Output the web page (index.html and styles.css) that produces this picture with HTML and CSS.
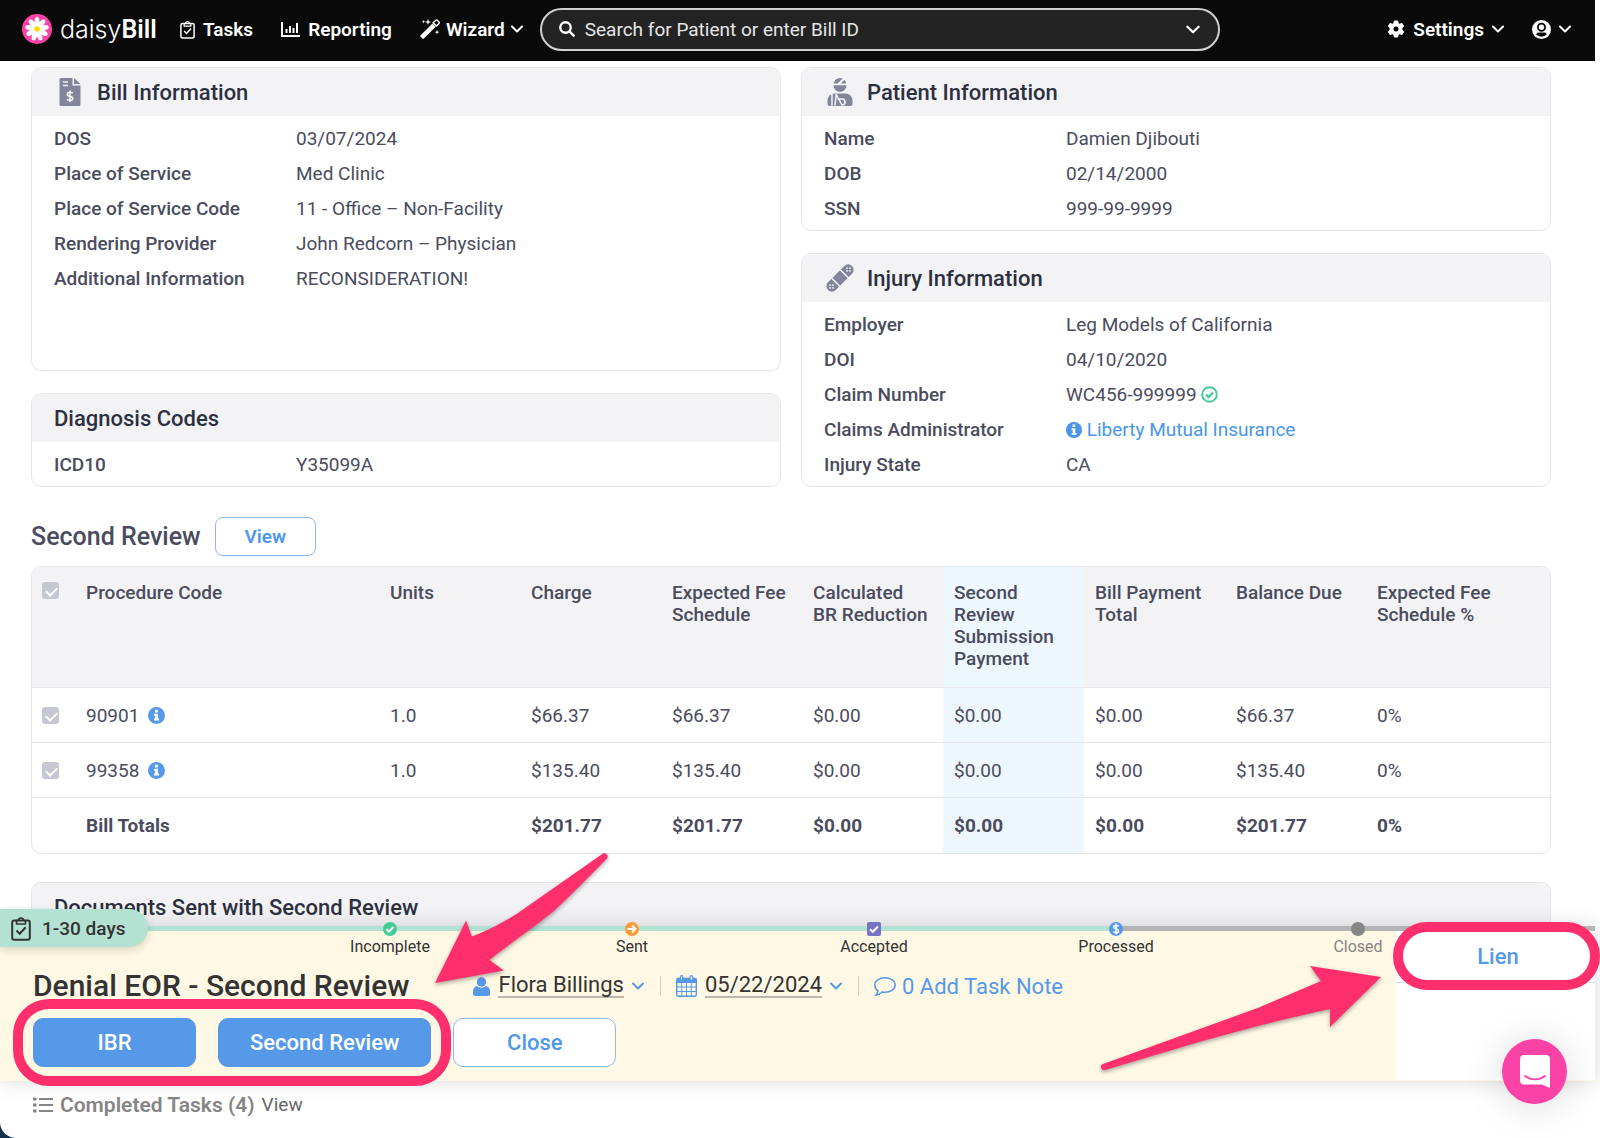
FILE: index.html
```
<!DOCTYPE html>
<html lang="en">
<head>
  <meta charset="UTF-8" />
  <meta name="viewport" content="width=device-width, initial-scale=1.0"/>
  <title>daisyBill - Second Review</title>
  <link rel="stylesheet" href="styles.css">
</head>
<body>
  <!-- shared icons -->
  <svg class="sprite" aria-hidden="true">
    <symbol id="chevron" viewBox="0 0 12 8"><path d="M1 1.5l5 5 5-5" fill="none" stroke="currentColor" stroke-width="2" stroke-linecap="round" stroke-linejoin="round"/></symbol>
    <symbol id="info" viewBox="0 0 16 16"><circle cx="8" cy="8" r="8" fill="currentColor"/><path d="M6.6 2.6h2.6v2.5H6.600zM5.600 6.300h3.700v4.600h1.100v1.900H5.600v-1.900h1.100V8.200H5.600z" fill="#fff"/></symbol>
    <symbol id="clipboard" viewBox="0 0 20 25"><rect x="1.200" y="4.500" width="17.600" height="19.300" rx="2" fill="none" stroke="currentColor" stroke-width="2"/><path d="M5.500 8V4.500h2a2.500 2.500 0 0 1 5 0h2V8z" fill="none" stroke="currentColor" stroke-width="1.600" stroke-linejoin="round"/><path d="M5.500 14.500l3.200 3.200 6-6.500" fill="none" stroke="currentColor" stroke-width="2"/></symbol>
  </svg>

  <div class="page">
    <header class="topbar">
      <a class="logo" href="#">
        <svg width="30" height="30" viewBox="0 0 30 30">
          <circle cx="15" cy="15" r="15" fill="#fb43a7"/>
          <g fill="#fff">
            <ellipse cx="15" cy="8" rx="2.500" ry="5"/>
            <ellipse cx="15" cy="8" rx="2.500" ry="5" transform="rotate(40 15 15)"/>
            <ellipse cx="15" cy="8" rx="2.500" ry="5" transform="rotate(80 15 15)"/>
            <ellipse cx="15" cy="8" rx="2.500" ry="5" transform="rotate(120 15 15)"/>
            <ellipse cx="15" cy="8" rx="2.500" ry="5" transform="rotate(160 15 15)"/>
            <ellipse cx="15" cy="8" rx="2.500" ry="5" transform="rotate(200 15 15)"/>
            <ellipse cx="15" cy="8" rx="2.500" ry="5" transform="rotate(240 15 15)"/>
            <ellipse cx="15" cy="8" rx="2.500" ry="5" transform="rotate(280 15 15)"/>
            <ellipse cx="15" cy="8" rx="2.500" ry="5" transform="rotate(320 15 15)"/>
            <circle cx="15" cy="15" r="5"/>
          </g>
          <circle cx="15" cy="15" r="2.800" fill="#fbdc00"/>
        </svg>
        <span class="logo-text">daisy<b>Bill</b></span>
      </a>
      <nav class="nav">
        <a href="#"><svg width="15" height="19"><use href="#clipboard"/></svg>Tasks</a>
        <a href="#">
          <svg width="19" height="15" viewBox="0 0 19 15"><path d="M1 0v14h18" fill="none" stroke="#fff" stroke-width="2"/><path d="M5.500 11V7M9 11V4M12.500 11V6M16 11V1" stroke="#fff" stroke-width="2"/></svg>Reporting
        </a>
        <a href="#" class="wizard">
          <svg width="20" height="20" viewBox="0 0 20 20" fill="#fff"><path d="M.7 16.300L12.500 4.500l3.200 3.200L3.900 19.500a1 1 0 0 1-1.500 0L.7 17.800a1 1 0 0 1 0-1.500z"/><path d="M13.200 3.800L15.800 1.200a1 1 0 0 1 1.500 0l1.700 1.700a1 1 0 0 1 0 1.500L16.400 7z" fill="none" stroke="#fff" stroke-width="1.400"/><path d="M8 0l.8 2.200L11 3l-2.200.8L8 6l-.8-2.200L5 3l2.200-.8zM3.500 1l.5 1.200 1.200.5-1.200.5-.5 1.200L3 3.200l-1.200-.5L3 2.200zM17 11l.6 1.600 1.600.6-1.600.6L17 15.400l-.6-1.600-1.600-.6 1.600-.6z"/></svg>Wizard
          <svg class="chev" width="12" height="8"><use href="#chevron"/></svg>
        </a>
      </nav>
      <label class="search">
        <svg width="16" height="16" viewBox="0 0 16 16" fill="none" stroke="#fff" stroke-width="2.400"><circle cx="6.500" cy="6.500" r="5.200"/><path d="M10.400 10.400l5 5"/></svg>
        <input type="text" placeholder="Search for Patient or enter Bill ID" aria-label="Search">
        <svg class="chev" width="14" height="9"><use href="#chevron"/></svg>
      </label>
      <nav class="nav account">
        <a href="#">
          <svg width="18" height="18" viewBox="0 0 18 18"><path fill="#fff" fill-rule="evenodd" stroke="#fff" stroke-linejoin="round" d="M7.300 0h3.400l.5 2.400 1.500.8 2.300-.8 1.700 2.900-1.800 1.700v2l1.800 1.700-1.700 2.900-2.300-.8-1.500.9-.5 2.300H7.300l-.5-2.300-1.500-.9-2.300.8-1.700-2.900L3.100 9V7L1.300 5.300 3 2.400l2.300.8 1.500-.8zM9 4.900a3.100 3.100 0 1 0 0 6.200 3.100 3.100 0 0 0 0-6.200z" transform="translate(0 1)"/></svg>Settings
          <svg class="chev" width="12" height="8"><use href="#chevron"/></svg>
        </a>
        <a href="#" aria-label="Account">
          <svg width="19" height="19" viewBox="0 0 19 19"><circle cx="9.500" cy="9.500" r="9.500" fill="#fff"/><circle cx="9.500" cy="7.300" r="3.600" fill="none" stroke="#0a0a0a" stroke-width="1.800"/><path d="M4 14.300c.8-1.700 2-1.900 3.200-1.900h4.600c1.200 0 2.400.2 3.200 1.900a7.500 7.500 0 0 1-11 0z" fill="#0a0a0a"/></svg>
          <svg class="chev" width="12" height="8"><use href="#chevron"/></svg>
        </a>
      </nav>
    </header>

    <main>
      <div class="cards">
        <div class="column">
          <section class="card grow">
            <h2>
              <svg width="22" height="28" viewBox="0 0 21 28"><path d="M1.500 0H13v7.500h8V26.500a1.500 1.500 0 0 1-1.500 1.500h-18A1.500 1.500 0 0 1 0 26.500v-25A1.500 1.500 0 0 1 1.500 0zM14.500 0L21 6h-6.500z" fill="#83869b"/><path d="M3.500 4h5M3.500 7.500h5" stroke="#f3f3f6" stroke-width="1.600"/><path d="M13.300 15.200c-.8-.7-1.800-1-2.800-1-1.700 0-2.700.8-2.700 2 0 3 5.500 1.300 5.500 4.300 0 1.300-1.200 2-2.800 2-1.200 0-2.300-.4-3-1.200M10.500 12.400v11.800" fill="none" stroke="#f3f3f6" stroke-width="1.600"/></svg>
              Bill Information
            </h2>
            <dl>
              <dt>DOS</dt><dd>03/07/2024</dd>
              <dt>Place of Service</dt><dd>Med Clinic</dd>
              <dt>Place of Service Code</dt><dd>11 - Office – Non-Facility</dd>
              <dt>Rendering Provider</dt><dd>John Redcorn – Physician</dd>
              <dt>Additional Information</dt><dd>RECONSIDERATION!</dd>
            </dl>
          </section>
          <section class="card">
            <h2>Diagnosis Codes</h2>
            <dl>
              <dt>ICD10</dt><dd>Y35099A</dd>
            </dl>
          </section>
        </div>
        <div class="column">
          <section class="card">
            <h2>
              <svg width="25" height="28" viewBox="0 0 25 28"><path d="M6.300 5.500A6.500 6.500 0 0 1 12.500 0c1 0 2 .2 2.800.6L10 5.500zM17 1.800a6.500 6.500 0 0 1 1.700 3.700h-5.500zM6 7.300h13a6.500 6.500 0 0 1-13 0z" fill="#83869b"/><path d="M7 15.500h11a7 7 0 0 1 7 7V26a2 2 0 0 1-2 2H2a2 2 0 0 1-2-2v-3.500a7 7 0 0 1 7-7z" fill="#83869b"/><path d="M4.500 16v12M8.800 15.500l-1.300 12M8.800 16.500L15 28M10 21h4.500a3 3 0 0 1 0 6" fill="none" stroke="#f3f3f6" stroke-width="1.500"/></svg>
              Patient Information
            </h2>
            <dl>
              <dt>Name</dt><dd>Damien Djibouti</dd>
              <dt>DOB</dt><dd>02/14/2000</dd>
              <dt>SSN</dt><dd>999-99-9999</dd>
            </dl>
          </section>
          <section class="card">
            <h2>
              <svg width="28" height="28" viewBox="0 0 28 28"><g transform="rotate(-45 14 14)"><rect x="-3" y="8.500" width="34" height="11" rx="5.500" fill="#83869b"/><path d="M8 8v12M20 8v12" stroke="#f3f3f6" stroke-width="1.500"/><g fill="#f3f3f6"><circle cx="2" cy="12" r=".9"/><circle cx="2" cy="16" r=".9"/><circle cx="0" cy="14" r=".9"/><circle cx="4" cy="14" r=".9"/><circle cx="26" cy="12" r=".9"/><circle cx="26" cy="16" r=".9"/><circle cx="24" cy="14" r=".9"/><circle cx="28" cy="14" r=".9"/></g></g></svg>
              Injury Information
            </h2>
            <dl>
              <dt>Employer</dt><dd>Leg Models of California</dd>
              <dt>DOI</dt><dd>04/10/2020</dd>
              <dt>Claim Number</dt>
              <dd>WC456-999999 <svg width="17" height="17" viewBox="0 0 17 17" fill="none" stroke="#43cb97"><circle cx="8.500" cy="8.500" r="7.300" stroke-width="2"/><path d="M5 8.500l2.600 2.500L12 6.500" stroke-width="2.400"/></svg></dd>
              <dt>Claims Administrator</dt>
              <dd><a href="#"><svg width="16" height="16"><use href="#info"/></svg> Liberty Mutual Insurance</a></dd>
              <dt>Injury State</dt><dd>CA</dd>
            </dl>
          </section>
        </div>
      </div>

      <div class="section-title">
        <h1>Second Review</h1>
        <button type="button" class="btn btn-small">View</button>
      </div>

      <div class="table-wrap">
        <table>
          <colgroup>
            <col class="col-check"><col><col class="col-num"><col class="col-num"><col class="col-num"><col class="col-num">
            <col class="col-num"><col class="col-num"><col class="col-num"><col class="col-last">
          </colgroup>
          <thead>
            <tr>
              <th><input type="checkbox" checked disabled aria-label="Select all"></th>
              <th>Procedure Code</th>
              <th>Units</th>
              <th>Charge</th>
              <th>Expected Fee Schedule</th>
              <th>Calculated<br>BR Reduction</th>
              <th class="highlight">Second<br>Review<br>Submission Payment</th>
              <th>Bill Payment Total</th>
              <th>Balance Due</th>
              <th>Expected Fee<br>Schedule %</th>
            </tr>
          </thead>
          <tbody>
            <tr>
              <td><input type="checkbox" checked disabled aria-label="Select 90901"></td>
              <td>90901 <svg class="row-info" width="17" height="17"><use href="#info"/></svg></td>
              <td>1.0</td><td>$66.37</td><td>$66.37</td><td>$0.00</td><td class="highlight">$0.00</td><td>$0.00</td><td>$66.37</td><td>0%</td>
            </tr>
            <tr>
              <td><input type="checkbox" checked disabled aria-label="Select 99358"></td>
              <td>99358 <svg class="row-info" width="17" height="17"><use href="#info"/></svg></td>
              <td>1.0</td><td>$135.40</td><td>$135.40</td><td>$0.00</td><td class="highlight">$0.00</td><td>$0.00</td><td>$135.40</td><td>0%</td>
            </tr>
            <tr class="totals">
              <td></td><td>Bill Totals</td><td></td><td>$201.77</td><td>$201.77</td><td>$0.00</td><td class="highlight">$0.00</td><td>$0.00</td><td>$201.77</td><td>0%</td>
            </tr>
          </tbody>
        </table>
      </div>

      <section class="card documents">
        <h2>Documents Sent with Second Review</h2>
      </section>
    </main>

    <div class="taskbar">
      <div class="track"></div>
      <div class="due"><svg width="20" height="25"><use href="#clipboard"/></svg>1-30 days</div>

      <div class="task-grid">
        <div class="task">
          <ol class="steps">
            <li><svg width="14" height="14" viewBox="0 0 14 14"><circle cx="7" cy="7" r="7" fill="#43cb97"/><path d="M3.500 7.200l2.500 2.300 4.500-4.500" fill="none" stroke="#fff" stroke-width="2"/></svg>Incomplete</li>
            <li><svg width="14" height="14" viewBox="0 0 14 14"><circle cx="7" cy="7" r="7" fill="#fd9a37"/><path d="M2.500 7h7.500M7 3.500L10.500 7 7 10.500" fill="none" stroke="#fff" stroke-width="2"/></svg>Sent</li>
            <li><svg width="14" height="14" viewBox="0 0 14 14"><rect width="14" height="14" rx="2" fill="#7672c4"/><path d="M3 7.200l2.800 2.600 5.200-5.300" fill="none" stroke="#fff" stroke-width="2"/></svg>Accepted</li>
            <li><svg width="14" height="14" viewBox="0 0 14 14"><circle cx="7" cy="7" r="7" fill="#5699e8"/><path d="M9.600 4.400C9 3.700 8 3.400 7 3.400c-1.400 0-2.400.6-2.400 1.700 0 2.600 5 1.200 5 3.800 0 1.100-1.100 1.800-2.600 1.800-1.100 0-2.100-.4-2.700-1.100M7 1.500v11" fill="none" stroke="#fff" stroke-width="1.500"/></svg>Processed</li>
            <li class="muted"><svg width="14" height="14" viewBox="0 0 14 14"><circle cx="7" cy="7" r="7" fill="#858585"/></svg>Closed</li>
          </ol>

          <div class="task-head">
            <h2>Denial EOR - Second Review</h2>
            <div class="meta">
              <a href="#" class="meta-item">
                <svg width="17" height="19" viewBox="0 0 17 19" fill="#5699e8"><circle cx="8.500" cy="5" r="4.700"/><path d="M4 9c2.500 2.200 6.500 2.200 9 0 2.500.5 4 2.500 4 5.500v2.500a2 2 0 0 1-2 2H2a2 2 0 0 1-2-2v-2.500C0 11.500 1.500 9.500 4 9z"/></svg>
                <span>Flora Billings</span>
                <svg class="chev" width="12" height="8"><use href="#chevron"/></svg>
              </a>
              <a href="#" class="meta-item">
                <svg width="21" height="22" viewBox="0 0 21 22" fill="none" stroke="#5699e8"><rect x=".7" y="3.500" width="19.600" height="17.800" rx="1.500" stroke-width="1.400"/><path d="M1 3.500h19v4H1z" fill="#5699e8"/><path d="M1 12h19M1 16.500h19M5.700 8v13M10.500 8v13M15.300 8v13"/><rect x="4.300" y=".7" width="2.600" height="4.600" rx="1.300" fill="#fef8e4" stroke-width="1.200"/><rect x="14" y=".7" width="2.600" height="4.600" rx="1.300" fill="#fef8e4" stroke-width="1.200"/></svg>
                <span>05/22/2024</span>
                <svg class="chev" width="12" height="8"><use href="#chevron"/></svg>
              </a>
              <a href="#" class="meta-item note">
                <svg width="22" height="19" viewBox="0 0 22 19"><path d="M11 .8c5.700 0 10.200 3.200 10.200 7.200S16.700 15.200 11 15.200c-1 0-2-.1-2.900-.3C6.500 16.600 4.400 17.800 2 18c1-1 1.700-2.400 2-4.200C2 12.500.8 10.400.8 8 .8 4 5.300.8 11 .8z" fill="none" stroke="#5699e8" stroke-width="1.500"/></svg>
                0 Add Task Note
              </a>
            </div>
          </div>

          <div class="actions">
            <div class="ringed">
              <button type="button" class="btn btn-primary">IBR</button>
              <button type="button" class="btn btn-primary">Second Review</button>
            </div>
            <button type="button" class="btn">Close</button>
          </div>
        </div>

        <aside class="side">
          <div class="ringed">
            <button type="button" class="lien">Lien</button>
          </div>
        </aside>
      </div>

      <svg class="arrow arrow-left" width="176" height="136" viewBox="0 0 176 136">
        <path d="M3 132L34 69.500l6 16 C57 79 72 71 86 62L171 2.500c3-1.500 6 2 4 5C157 26 140 43 122 60 98 79 76 94 57.500 109L72 119.500z" fill="#ff2f6d"/>
      </svg>
      <svg class="arrow arrow-right" width="284" height="108" viewBox="0 0 284 108">
        <path d="M4 99L160 42.500 222 16 211 1l71 11-51 50V44C188 53 144 65 100 77L6 105c-4 1-6-5-2-6z" fill="#ff2f6d"/>
      </svg>
    </div>

    <footer class="completed">
      <svg width="20" height="16" viewBox="0 0 20 16" fill="none" stroke="#858585"><path d="M6 2h14M6 8h14M6 14h14" stroke-width="2.200"/><path d="M0 2h3.500M0 8h3.500M0 14h3.500" stroke-width="3"/></svg>
      <b>Completed Tasks (4)</b>
      <a href="#">View</a>
    </footer>

    <button type="button" class="chat" aria-label="Open chat">
      <svg width="30" height="34" viewBox="0 0 30 34"><path d="M4 0h22a4 4 0 0 1 4 4v29l-8-3.500H4a4 4 0 0 1-4-4V4a4 4 0 0 1 4-4z" fill="#fff"/><path d="M5 21c6 4.500 14 4.500 20 0" fill="none" stroke="#fb43a7" stroke-width="1.800" stroke-linecap="round"/></svg>
    </button>
  </div>
</body>
</html>
```

FILE: styles.css
```
* {
  box-sizing: border-box;
}

body {
  margin: 0;
  min-height: 100vh;
  background: #fff linear-gradient(#12304d, #12304d) left bottom / 16px 16px no-repeat;
  font-family: Roboto, "Liberation Sans", sans-serif;
  font-size: 19px;
  color: #4a4c5e;
}

.page {
  position: relative;
  min-height: 100vh;
  margin-right: 5px;
  background: #fff;
  border-bottom-left-radius: 16px;
}

h1, h2, dl, dd, ol {
  margin: 0;
  padding: 0;
}

a {
  color: #4796ec;
  text-decoration: none;
}

button, input {
  font-family: inherit;
  font-size: inherit;
}

.sprite {
  position: absolute;
  width: 0;
  height: 0;
}

/* top bar */
.topbar {
  display: flex;
  align-items: center;
  height: 61px;
  padding: 0 24px 3px 22px;
  background: #0a0a0a;
}

.logo {
  display: flex;
  align-items: center;
  gap: 8px;
  width: 158px;
  color: #fff;
}

.logo-text {
  font-family: Inter, sans-serif;
  font-size: 25px;
  font-weight: 300;
  line-height: 30px;
}

.logo-text b {
  font-family: Roboto, sans-serif;
  font-weight: 600;
}

.nav {
  display: flex;
  align-items: center;
  gap: 28px;
}

.nav a {
  display: flex;
  align-items: center;
  gap: 8px;
  color: #fff;
  font-weight: 600;
}

.nav .wizard {
  gap: 6px;
}

.search {
  display: flex;
  align-items: center;
  gap: 10px;
  flex: 0 1 680px;
  height: 43px;
  margin-left: 17px;
  padding: 0 18px 0 17px;
  background: #232323;
  border: 2px solid #cfcfcf;
  border-radius: 22px;
  color: #fff;
}

.search input {
  flex: 1;
  min-width: 0;
  padding: 0;
  background: none;
  border: 0;
  outline: 0;
  color: #fff;
}

.search input::placeholder {
  color: #e6e6e6;
  opacity: 1;
}

.account {
  margin-left: auto;
}

/* info cards */
main {
  padding: 6px 44px 0 31px;
}

.cards {
  display: grid;
  grid-template-columns: 1fr 1fr;
  gap: 20px;
}

.column {
  display: flex;
  flex-direction: column;
  gap: 22px;
}

.card {
  border: 1px solid #e6e6e9;
  border-radius: 10px;
  overflow: hidden;
}

.grow {
  flex: 1;
}

.card h2 {
  display: flex;
  align-items: center;
  gap: 11px;
  height: 48px;
  padding: 0 22px;
  background: #f3f3f6;
  color: #2d3040;
  font-size: 22px;
  font-weight: 500;
}

.card h2 svg {
  width: 32px;
}

.card dl {
  display: grid;
  grid-template-columns: 242px 1fr;
  padding: 5px 22px 4px;
  line-height: 35px;
}

.card dt {
  font-weight: 500;
}

.card dd svg {
  vertical-align: -2px;
}

.section-title {
  display: flex;
  align-items: center;
  gap: 14px;
  margin: 30px 0 10px;
}

h1 {
  font-size: 25px;
  font-weight: 500;
  line-height: 34px;
}

.btn {
  min-width: 163px;
  height: 49px;
  padding: 0 31px;
  background: #fff;
  border: 1px solid #8dbaf1;
  border-radius: 10px;
  color: #4f97e9;
  font-size: 22px;
  font-weight: 500;
}

.btn-small {
  min-width: 101px;
  height: 39px;
  padding: 0 16px;
  border-radius: 8px;
  font-size: 19px;
  font-weight: 600;
}

.btn-primary {
  background: #5699e8;
  border-color: #5699e8;
  color: #fff;
}

/* procedure table */
.table-wrap {
  border: 1px solid #e6e6e9;
  border-radius: 10px;
  overflow: hidden;
}

table {
  width: 100%;
  table-layout: fixed;
  border-spacing: 0;
}

.col-check { width: 43px; }
.col-num { width: 141px; }
.col-last { width: 184px; }

th {
  height: 121px;
  padding: 15px 0 0 11px;
  background: #f3f3f6;
  border-bottom: 1px solid #e6e6e9;
  font-weight: 500;
  line-height: 22px;
  text-align: left;
  vertical-align: top;
}

td {
  height: 55px;
  padding: 0 0 0 11px;
  border-bottom: 1px solid #e6e6e9;
}

th:first-child, td:first-child {
  padding-left: 10px;
}

th.highlight, td.highlight {
  background: #eff7fe;
}

.totals td {
  border-bottom: 0;
  font-weight: 700;
}

.row-info {
  margin-left: 4px;
  color: #5699e8;
  vertical-align: -2px;
}

input[type="checkbox"] {
  appearance: none;
  position: relative;
  display: block;
  width: 17px;
  height: 17px;
  margin: 0;
  background: #c5c8d2;
  border-radius: 3px;
}

input[type="checkbox"]::after {
  content: "";
  position: absolute;
  left: 6px;
  top: 3px;
  width: 5px;
  height: 9px;
  border: solid #fff;
  border-width: 0 2px 2px 0;
  transform: rotate(45deg);
}

.documents {
  margin: 28px 0 -5px;
  border-bottom: 0;
  border-radius: 10px 10px 0 0;
}

/* task bar */
.taskbar {
  position: relative;
  background: #fef8e4;
  box-shadow: 0 0 20px rgba(0, 0, 0, 0.15);
}

.track {
  height: 5px;
  background: linear-gradient(to right, #b3e2d3 70%, #b4b4b4 70%);
}

.due {
  position: absolute;
  left: 0;
  top: -17px;
  display: flex;
  align-items: center;
  gap: 11px;
  width: 148px;
  height: 38px;
  padding-left: 11px;
  background: #b3e2d3;
  border-radius: 0 19px 19px 0;
  box-shadow: 0 3px 8px rgba(0, 0, 0, 0.15);
  color: #333;
  font-weight: 500;
}

.task-grid {
  display: grid;
  grid-template-columns: 1fr 199px;
}

.task {
  padding: 0 0 14px 33px;
}

.steps {
  position: relative;
  display: flex;
  margin: -9px -83px 0 236px;
  list-style: none;
  color: #333;
  font-size: 16px;
  line-height: 22px;
}

.steps li {
  display: flex;
  flex: 1;
  flex-direction: column;
  align-items: center;
}

.steps .muted {
  color: #858585;
}

.task-head {
  display: flex;
  align-items: center;
  gap: 64px;
  margin: 10px 0 14px;
}

.task-head h2 {
  color: #333;
  font-size: 30px;
  font-weight: 500;
  line-height: 36px;
}

.meta {
  display: flex;
  align-items: center;
}

.meta-item {
  display: flex;
  align-items: center;
  gap: 8px;
  height: 20px;
  color: #5699e8;
  font-size: 22px;
}

.meta-item + .meta-item {
  margin-left: 16px;
  padding-left: 15px;
  border-left: 1px solid #d3cfc2;
}

.meta-item span {
  border-bottom: 2px solid #bbb8ae;
  color: #333;
  line-height: 22px;
}

.meta-item.note {
  gap: 6px;
}

.actions {
  display: flex;
  gap: 22px;
}

/* pink highlight around the buttons */
.ringed {
  position: relative;
  display: flex;
  gap: 22px;
}

.ringed::after {
  content: "";
  position: absolute;
  inset: -19px -20px;
  border: 10px solid #ff2f6d;
  border-radius: 36px;
  pointer-events: none;
}

.side {
  margin-bottom: 1px;
  background: #fff;
}

.side .ringed::after {
  inset: -9px -5px -8px -3px;
  background: #fff;
  border-radius: 34px;
}

.lien {
  position: relative;
  z-index: 1;
  width: 100%;
  height: 51px;
  padding: 0 0 0 5px;
  background: none;
  border: 0;
  color: #5699e8;
  font-size: 22px;
  font-weight: 500;
}

.side .ringed {
  border-bottom: 1px solid #ddd;
}

.arrow {
  position: absolute;
  filter: drop-shadow(0 2px 2px rgba(0, 0, 0, 0.35));
  pointer-events: none;
}

.arrow-left {
  left: 432px;
  top: -75px;
}

.arrow-right {
  right: 212px;
  top: 39px;
}

.completed {
  display: flex;
  align-items: center;
  gap: 7px;
  padding: 11px 33px;
  color: #858585;
  font-size: 21px;
  line-height: 26px;
}

.completed b {
  font-weight: 600;
}

.completed a {
  color: #666;
  font-size: 19px;
}

.chat {
  position: absolute;
  right: 28px;
  bottom: 34px;
  display: flex;
  align-items: center;
  justify-content: center;
  width: 65px;
  height: 65px;
  padding: 0;
  background: #fb43a7;
  border: 0;
  border-radius: 50%;
  box-shadow: 0 2px 40px rgba(0, 0, 0, 0.15);
}
```
